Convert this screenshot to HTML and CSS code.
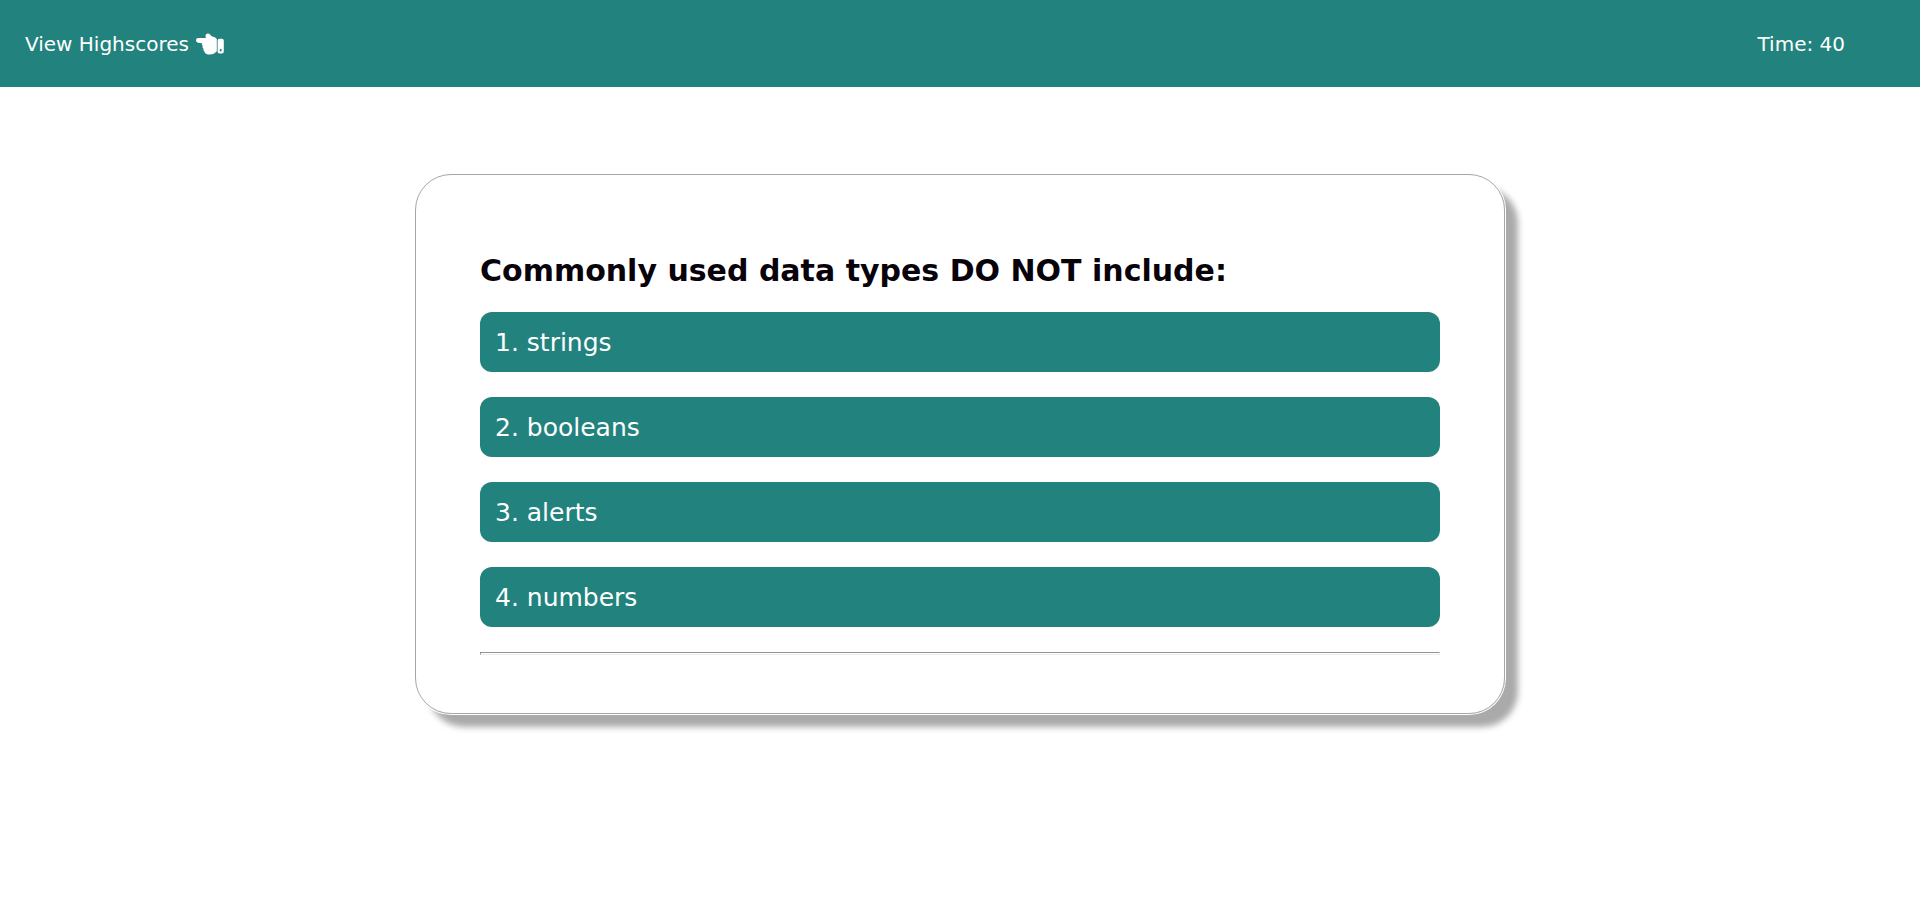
FILE: index.html
```html
<!DOCTYPE html>
<html lang="en">
<head>
  <meta charset="utf-8">
  <meta name="viewport" content="width=device-width, initial-scale=1">
  <title>Code Quiz</title>
  <link rel="stylesheet" href="styles.css">
</head>
<body>
  <header class="topbar">
    <a class="scores-link" href="#highscores">View Highscores
      <svg class="hand" viewBox="0 0 28 22" aria-hidden="true">
        <path fill="currentColor" d="M2 5h8C9.200 3.500 9.300 1.600 10.800.8c1.300-.7 2.500-.1 3.200.8l2 1.900c2 .2 3.600 1 4.800 2.500v12.200c-1.600 2-4 3.300-7 3.300-3 0-5-.9-5.300-2.800-1-.9-1.300-1.900-1-2.900-1-.9-1.200-2-.8-3-.8-.8-.9-1.600-.7-2.500L2 9.700C-.6 9.400-.6 5.300 2 5z"/>
        <path fill="currentColor" fill-rule="evenodd" d="M23.600 5.800h2.200c1.200 0 2 .8 2 2v10.700c0 1.200-.8 2-2 2h-2.200c-1.200 0-2-.8-2-2V7.800c0-1.200.8-2 2-2zm1.100 10c-1.400 0-1.400 2.600 0 2.600s1.400-2.600 0-2.600z"/>
      </svg>
    </a>
    <p class="timer">Time: 40</p>
  </header>
  <main class="page">
    <section class="card">
      <h1 class="question">Commonly used data types DO NOT include:</h1>
      <div class="answers">
        <button class="answer" type="button">1. strings</button>
        <button class="answer" type="button">2. booleans</button>
        <button class="answer" type="button">3. alerts</button>
        <button class="answer" type="button">4. numbers</button>
      </div>
      <hr class="rule">
    </section>
  </main>
</body>
</html>
```
FILE: styles.css
```css
* {
  box-sizing: border-box;
}

body {
  margin: 0;
  background: #fff;
  color: #08020a;
  font-family: Verdana, "DejaVu Sans", sans-serif;
}

.topbar {
  display: flex;
  align-items: center;
  justify-content: space-between;
  padding: 29px 75px 28px 25px;
  background: #22827e;
  color: #fff;
  font-size: 20px;
  line-height: 30px;
}

.scores-link {
  display: flex;
  align-items: center;
  gap: 7px;
  color: inherit;
  text-decoration: none;
}

.hand {
  width: 28px;
  height: 22px;
}

.timer {
  margin: 0;
}

.page {
  display: flex;
  justify-content: center;
  padding: 87px 0;
}

.card {
  box-sizing: content-box;
  width: 50%;
  min-width: 320px;
  padding: 76px 64px 58px;
  border: 1px solid #a6a6a6;
  border-radius: 36px;
  box-shadow: 0 0 0 1px #fff, 13px 13px 6px #aaa;
}

.question {
  margin: 0 0 21px;
  font-size: 30px;
  line-height: 40px;
}

.answers {
  display: grid;
  gap: 25px;
}

.answer {
  padding: 13px 15px 11px;
  border: 0;
  border-radius: 12px;
  background: #22827e;
  color: #fff;
  font-family: inherit;
  font-size: 25px;
  line-height: 36px;
  text-align: left;
  cursor: pointer;
}

.rule {
  height: 3px;
  margin: 25px 0 0;
  border: 1px solid;
  border-color: #94948e #eee #eee #94948e;
}
```
